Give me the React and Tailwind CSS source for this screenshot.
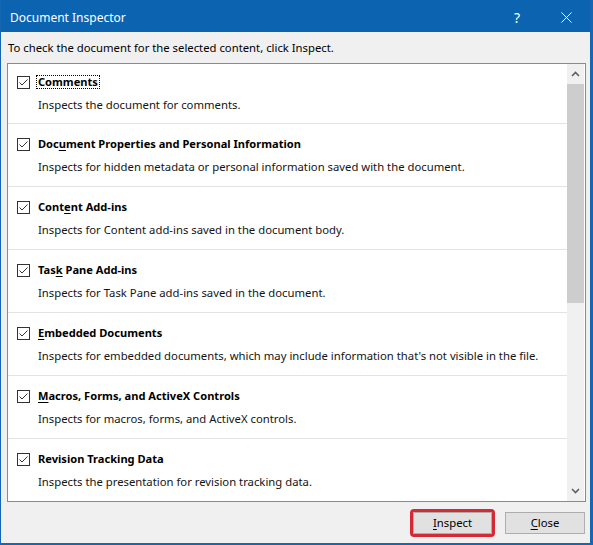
import React from "react";

const items = [
  { pre: "", key: "", post: "Comments", desc: "Inspects the document for comments.", focus: true },
  { pre: "Doc", key: "u", post: "ment Properties and Personal Information", desc: "Inspects for hidden metadata or personal information saved with the document." },
  { pre: "Cont", key: "e", post: "nt Add-ins", desc: "Inspects for Content add-ins saved in the document body." },
  { pre: "Tas", key: "k", post: " Pane Add-ins", desc: "Inspects for Task Pane add-ins saved in the document." },
  { pre: "", key: "E", post: "mbedded Documents", desc: "Inspects for embedded documents, which may include information that's not visible in the file." },
  { pre: "", key: "M", post: "acros, Forms, and ActiveX Controls", desc: "Inspects for macros, forms, and ActiveX controls." },
  { pre: "", key: "", post: "Revision Tracking Data", desc: "Inspects the presentation for revision tracking data." },
];

const CheckBox = () => (
  <span className="w-[13px] h-[13px] border border-[#333333] bg-white flex items-center justify-center shrink-0">
    <svg width="11" height="11" viewBox="0 0 11 11">
      <polyline points="1.5,5.5 4,8 9.5,2.5" fill="none" stroke="#333333" strokeWidth="1" />
    </svg>
  </span>
);

const Row = ({ item, first }) => (
  <div
    className={
      first
        ? "h-[59px] pt-[10px] pl-[9px]"
        : "h-[63px] pt-[12px] pl-[9px] border-t border-[#e3e3e3]"
    }
  >
    <div className="flex items-center h-[16px]">
      <CheckBox />
      <span
        className={
          item.focus
            ? "ml-[7px] px-[1px] font-bold text-[11.1px] text-black leading-[12px] outline-1 outline-dotted outline-black"
            : "ml-[8px] font-bold text-[11.1px] text-black leading-[16px]"
        }
      >
        {item.pre}
        {item.key && <span className="underline underline-offset-2">{item.key}</span>}
        {item.post}
      </span>
    </div>
    <div className="mt-[7px] ml-[21px] text-[11.3px] leading-[16px] text-[#141414]">{item.desc}</div>
  </div>
);

const App = () => {
  return (
    <div
      className="w-[593px] h-[545px] bg-[#f0f0f0] border-l border-r-[3px] border-b-2 border-[#1566b3] flex flex-col overflow-hidden"
      style={{ fontFamily: '"Noto Sans", "Open Sans", sans-serif' }}
    >
      {/* Title bar */}
      <div className="h-[32px] bg-[#0c64b0] flex items-center text-white shrink-0 -ml-px pt-[3px]">
        <span className="ml-[10px] text-[12px]">Document Inspector</span>
        <span className="ml-auto text-[14px] mr-[41px]">?</span>
        <svg width="11" height="11" viewBox="0 0 11 11" className="mr-[18px]">
          <path d="M0.5 0.5 L10.5 10.5 M10.5 0.5 L0.5 10.5" stroke="white" strokeWidth="1" />
        </svg>
      </div>

      <div className="pt-[8px] pl-[7px] text-[11.3px] leading-[16px] text-black">
        To check the document for the selected content, click Inspect.
      </div>

      {/* List box */}
      <div className="mt-[7px] ml-[6px] w-[579px] h-[439px] border border-[#8a8a8a] bg-white flex">
        <div className="flex-1 flex flex-col">
          {items.map((item, i) => (
            <Row key={i} item={item} first={i === 0} />
          ))}
        </div>
        <div className="w-[17px] bg-[#f0f0f0] flex flex-col mr-px">
          <div className="h-[20px] flex items-center justify-center">
            <svg width="9" height="6" viewBox="0 0 9 6">
              <polyline points="1,5 4.5,1.5 8,5" fill="none" stroke="#606060" strokeWidth="1.6" />
            </svg>
          </div>
          <div className="h-[219px] bg-[#cdcdcd]" />
          <div className="flex-1" />
          <div className="h-[20px] flex items-center justify-center">
            <svg width="9" height="6" viewBox="0 0 9 6">
              <polyline points="1,1 4.5,4.5 8,1" fill="none" stroke="#606060" strokeWidth="1.6" />
            </svg>
          </div>
        </div>
      </div>

      {/* Buttons */}
      <div className="mt-[10px] flex justify-end pr-[5px] gap-[13px]">
        <button className="w-[79px] h-[22px] bg-[#e1e1e1] border border-[#adadad] text-[11.3px] text-black outline-[3px] outline-solid outline-[#d42a35] rounded-[1px]">
          <span className="underline underline-offset-2">I</span>nspect
        </button>
        <button className="w-[80px] h-[22px] bg-[#e1e1e1] border border-[#adadad] text-[11.3px] text-black">
          <span className="underline underline-offset-2">C</span>lose
        </button>
      </div>
    </div>
  );
};

export default App;
